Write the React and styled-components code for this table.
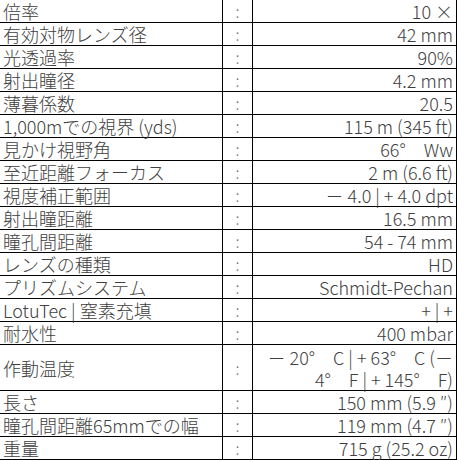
import React from 'react';
import styled, { createGlobalStyle } from 'styled-components';

const GlobalStyle = createGlobalStyle`
  html, body {
    margin: 0;
    padding: 0;
    background: #ffffff;
  }
  body {
    font-family: "Noto Sans CJK JP", "Noto Sans", sans-serif;
  }
`;

const specs = [
  { label: '倍率', value: '10 ×' },
  { label: '有効対物レンズ径', value: '42 mm' },
  { label: '光透過率', value: '90%' },
  { label: '射出瞳径', value: '4.2 mm' },
  { label: '薄暮係数', value: '20.5' },
  { label: '1,000mでの視界 (yds)', value: '115 m (345 ft)' },
  { label: '見かけ視野角', value: '66°　Ww' },
  { label: '至近距離フォーカス', value: '2 m (6.6 ft)' },
  { label: '視度補正範囲', value: '－ 4.0 | + 4.0 dpt' },
  { label: '射出瞳距離', value: '16.5 mm' },
  { label: '瞳孔間距離', value: '54 - 74 mm' },
  { label: 'レンズの種類', value: 'HD' },
  { label: 'プリズムシステム', value: 'Schmidt-Pechan' },
  { label: 'LotuTec | 窒素充填', value: '+ | +' },
  { label: '耐水性', value: '400 mbar' },
  { label: '作動温度', value: ['－ 20°　C | + 63°　C (－', '4°　F | + 145°　F)'], tall: true },
  { label: '長さ', value: '150 mm (5.9 ″)' },
  { label: '瞳孔間距離65mmでの幅', value: '119 mm (4.7 ″)' },
  { label: '重量', value: '715 g (25.2 oz)' },
];

const App = () => {
  return (
    <>
      <GlobalStyle />
      <Sheet>
        {specs.map((row) => (
          <Row key={row.label} $tall={row.tall}>
            <Label>{row.label}</Label>
            <Colon>:</Colon>
            <Value>
              {Array.isArray(row.value)
                ? row.value.map((line) => <Line key={line}>{line}</Line>)
                : row.value}
            </Value>
          </Row>
        ))}
      </Sheet>
    </>
  );
};

export default App;

const Sheet = styled.div`
  width: 457px;
  display: flex;
  flex-direction: column;
  color: #404040;
  font-size: 18px;
  font-weight: 300;
`;

const Row = styled.div`
  display: grid;
  grid-template-columns: 223px 30px 204px;
  height: ${(p) => (p.$tall ? '46px' : '23px')};
  box-sizing: border-box;
  border-bottom: 1px solid #000000;
`;

const Cell = styled.div`
  box-sizing: border-box;
  border-right: 1px solid #000000;
  display: flex;
  align-items: center;
  white-space: nowrap;
  line-height: 22px;
`;

const Label = styled(Cell)`
  padding-left: 3px;
`;

const Colon = styled(Cell)`
  justify-content: center;
  color: #777777;
  font-size: 16px;
`;

const Value = styled(Cell)`
  flex-direction: column;
  align-items: flex-end;
  justify-content: center;
  padding-right: 3px;
`;

const Line = styled.span`
  display: block;
  line-height: 22px;
`;
